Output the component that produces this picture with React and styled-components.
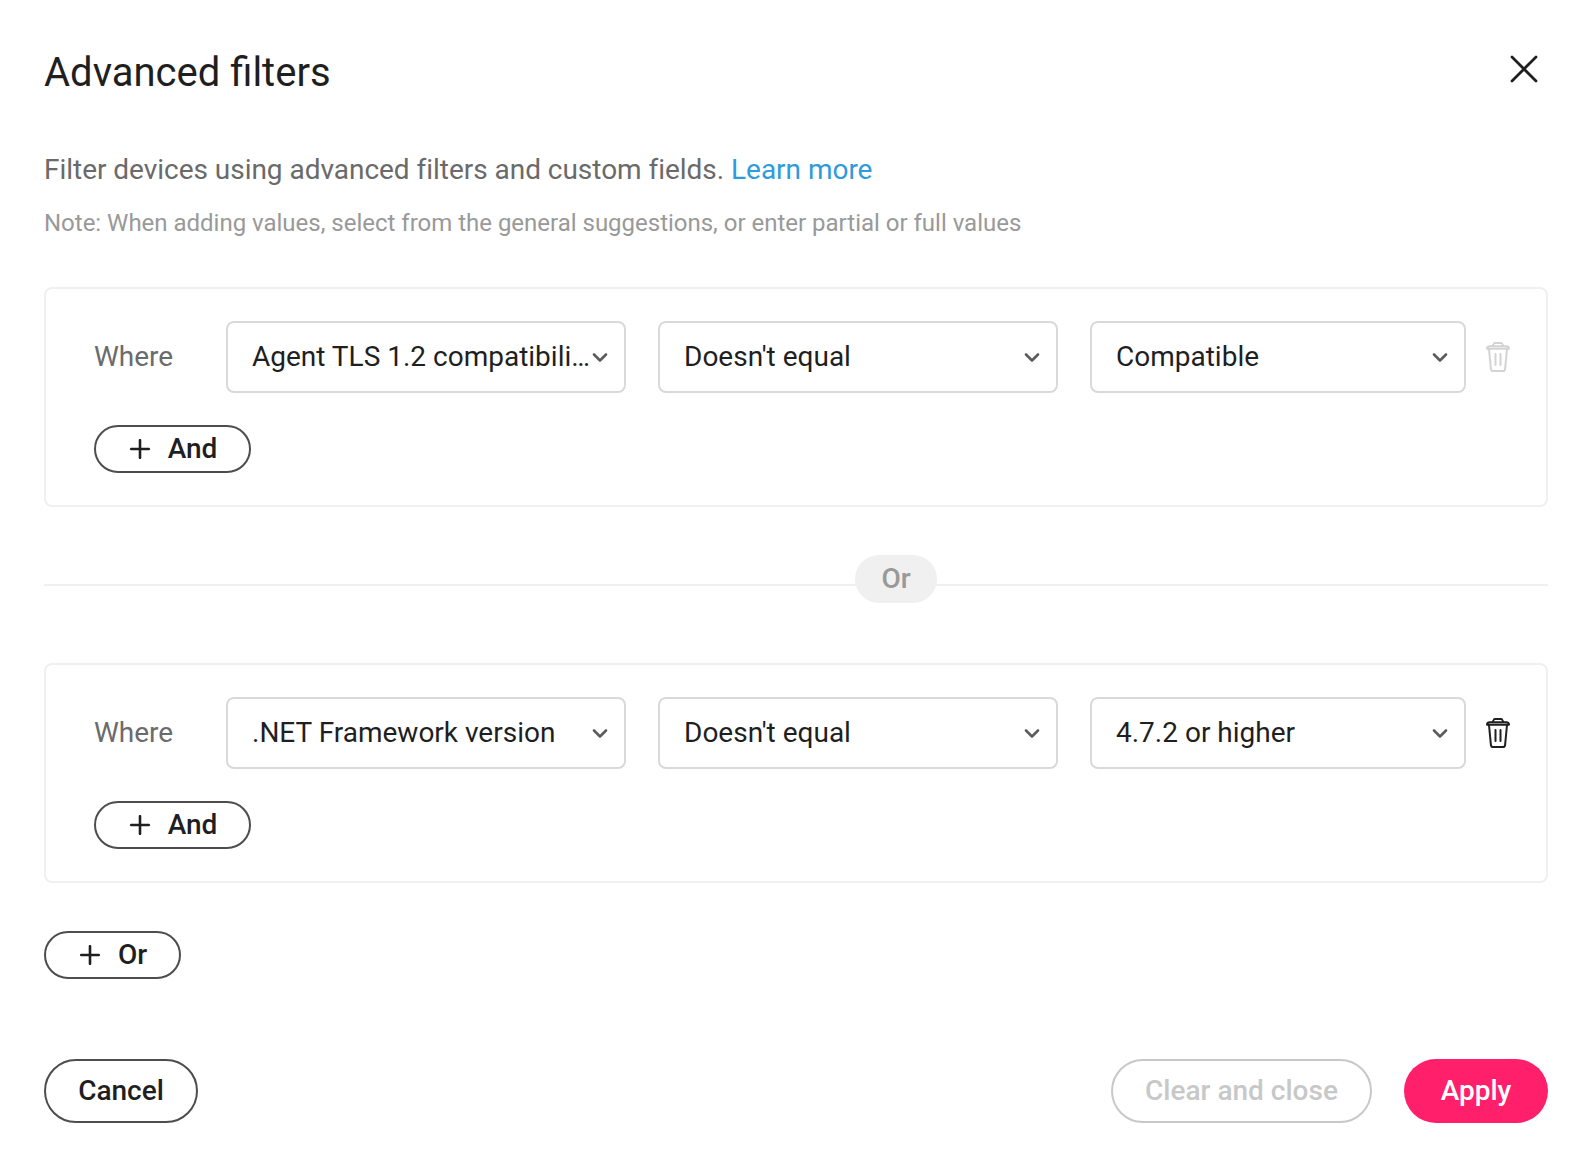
import React from "react";
import styled, { createGlobalStyle } from "styled-components";

const Global = createGlobalStyle`
  html, body { margin: 0; padding: 0; background: #fff; }
  body { font-family: Roboto, "Liberation Sans", sans-serif; color: #1c1c1c; }
  * { box-sizing: border-box; }
`;

const Dialog = styled.div`
  width: 1592px;
  height: 1166px;
  padding: 45px 44px 0;
  display: flex;
  flex-direction: column;
`;
const Header = styled.header`
  display: flex;
  justify-content: space-between;
  align-items: flex-start;
  height: 56px;
`;
const Title = styled.h1`
  margin: 0;
  font-size: 40px;
  line-height: 56px;
  font-weight: 400;
  color: #1f1f1f;
`;
const CloseButton = styled.button`
  border: 0;
  background: none;
  padding: 0;
  margin: 9px 9px 0 0;
  width: 30px;
  height: 30px;
  color: #1f1f1f;
  display: flex;
`;
const Description = styled.p`
  margin: 49px 0 0;
  font-size: 28px;
  line-height: 40px;
  letter-spacing: -0.03px;
  color: #6a6a6a;
`;
const LearnMore = styled.a`
  color: #2e9bdc;
  text-decoration: none;
`;
const Note = styled.p`
  margin: 17px 0 0;
  font-size: 24px;
  line-height: 32px;
  letter-spacing: -0.01px;
  color: #999;
`;
const Card = styled.section`
  margin-top: ${(p) => p.$top}px;
  height: 220px;
  border: 2px solid #f0f0f0;
  border-radius: 8px;
  padding: 32px 34px 32px 48px;
  display: flex;
  flex-direction: column;
  gap: 32px;
`;
const Row = styled.div`
  display: flex;
  align-items: center;
  gap: 32px;
`;
const Where = styled.span`
  width: 100px;
  margin-bottom: 2px;
  font-size: 28px;
  color: #6b6b6b;
`;
const Select = styled.div`
  width: ${(p) => p.$w}px;
  height: 72px;
  border: 2px solid #d9d9d9;
  border-radius: 8px;
  padding: 0 16px 0 24px;
  display: flex;
  align-items: center;
  justify-content: space-between;
  font-size: 28px;
  color: #1f1f1f;
`;
const SelectText = styled.span`
  flex: 1;
  min-width: 0;
  margin-bottom: 2px;
  white-space: nowrap;
  overflow: hidden;
  text-overflow: ellipsis;
`;
const Chevron = styled.svg`
  flex: none;
  width: 16px;
  height: 20px;
  color: #5c5c5c;
`;
const Trash = styled.svg`
  flex: none;
  width: 24px;
  height: 30px;
  margin-left: -12px;
  color: ${(p) => (p.$disabled ? "#d3d3d3" : "#1f1f1f")};
`;
const PillAdd = styled.button`
  align-self: flex-start;
  width: ${(p) => p.$w}px;
  height: ${(p) => p.$h}px;
  border: 2px solid #4d4d4d;
  border-radius: 25px;
  background: #fff;
  font: 500 28px Roboto, sans-serif;
  color: #1f1f1f;
  padding: 0 0 1px 2px;
  display: flex;
  align-items: center;
  justify-content: center;
  gap: 18px;
`;
const PlusIcon = styled.svg`
  width: 20px;
  height: 20px;
  flex: none;
`;
const Divider = styled.div`
  margin-top: 48px;
  height: 48px;
  position: relative;
`;
const Line = styled.div`
  position: absolute;
  left: 0;
  right: 0;
  top: 29px;
  height: 2px;
  background: #f0f0f0;
`;
const OrPill = styled.div`
  position: absolute;
  left: 811px;
  top: 0;
  width: 82px;
  height: 48px;
  padding-bottom: 2px;
  border-radius: 24px;
  background: #f0f0f0;
  color: #999;
  font-size: 28px;
  font-weight: 500;
  display: flex;
  align-items: center;
  justify-content: center;
`;
const OrRow = styled.div`
  margin-top: 48px;
  display: flex;
`;
const Footer = styled.footer`
  margin-top: 80px;
  display: flex;
  align-items: center;
  gap: 32px;
`;
const Spacer = styled.div`
  flex: 1;
`;
const ActionButton = styled.button`
  width: ${(p) => p.$w}px;
  height: 64px;
  border-radius: 32px;
  font: 500 28px Roboto, sans-serif;
  padding: 0 0 2px;
  background: ${(p) => (p.$primary ? "#ff1f6b" : "#fff")};
  color: ${(p) => (p.$primary ? "#fff" : p.$muted ? "#c8c8c8" : "#1f1f1f")};
  border: ${(p) => (p.$primary ? "0" : p.$muted ? "2px solid #c8c8c8" : "2px solid #4d4d4d")};
`;

const ChevronIcon = () => (
  <Chevron viewBox="2 0 16 20" fill="none" stroke="currentColor" strokeWidth="2.6" strokeLinecap="round" strokeLinejoin="round">
    <path d="M4 7.5l6 6 6-6" />
  </Chevron>
);
const TrashIcon = ({ disabled }) => (
  <Trash $disabled={disabled} viewBox="0 0 24 30" fill="none" stroke="currentColor" strokeWidth="2" strokeLinejoin="round" strokeLinecap="round">
    <path d="M1 6.8C1 5 2.2 4.2 3.6 4.2h16.8C21.8 4.2 23 5 23 6.8z" />
    <path d="M6.8 4l.8-2c.2-.6.6-1 1.2-1h6.4c.6 0 1 .4 1.2 1l.8 2" />
    <path d="M3 7l1.9 19.8c.1 1.3.9 2.2 2.1 2.2h10c1.2 0 2-.9 2.1-2.2L21 7" />
    <path d="M9.5 12v11M14.5 12v11" />
  </Trash>
);
const Plus = () => (
  <PlusIcon viewBox="0 0 20 20" fill="none" stroke="currentColor" strokeWidth="2.6" strokeLinecap="round">
    <path d="M10 1.2v17.6M1.2 10h17.6" />
  </PlusIcon>
);

const Filter = ({ top, field, value, disabled }) => (
  <Card $top={top}>
    <Row>
      <Where>Where</Where>
      <Select $w={400}>
        <SelectText>{field}</SelectText>
        <ChevronIcon />
      </Select>
      <Select $w={400}>
        <SelectText>Doesn't equal</SelectText>
        <ChevronIcon />
      </Select>
      <Select $w={376}>
        <SelectText>{value}</SelectText>
        <ChevronIcon />
      </Select>
      <TrashIcon disabled={disabled} />
    </Row>
    <PillAdd $w={157} $h={49}>
      <Plus />
      And
    </PillAdd>
  </Card>
);

export default function App() {
  return (
    <Dialog>
      <Global />
      <Header>
        <Title>Advanced filters</Title>
        <CloseButton aria-label="Close">
          <svg width="30" height="30" viewBox="0 0 30 30" fill="none" stroke="currentColor" strokeWidth="2.8" strokeLinecap="round">
            <path d="M3 3l24 24M27 3L3 27" />
          </svg>
        </CloseButton>
      </Header>
      <Description>
        Filter devices using advanced filters and custom fields. <LearnMore href="#">Learn more</LearnMore>
      </Description>
      <Note>Note: When adding values, select from the general suggestions, or enter partial or full values</Note>
      <Filter top={48} field="Agent TLS 1.2 compatibility status" value="Compatible" disabled />
      <Divider>
        <Line />
        <OrPill>Or</OrPill>
      </Divider>
      <Filter top={60} field=".NET Framework version" value="4.7.2 or higher" />
      <OrRow>
        <PillAdd $w={137} $h={48}>
          <Plus />
          Or
        </PillAdd>
      </OrRow>
      <Footer>
        <ActionButton $w={154}>Cancel</ActionButton>
        <Spacer />
        <ActionButton $w={261} $muted>Clear and close</ActionButton>
        <ActionButton $w={144} $primary>Apply</ActionButton>
      </Footer>
    </Dialog>
  );
}
